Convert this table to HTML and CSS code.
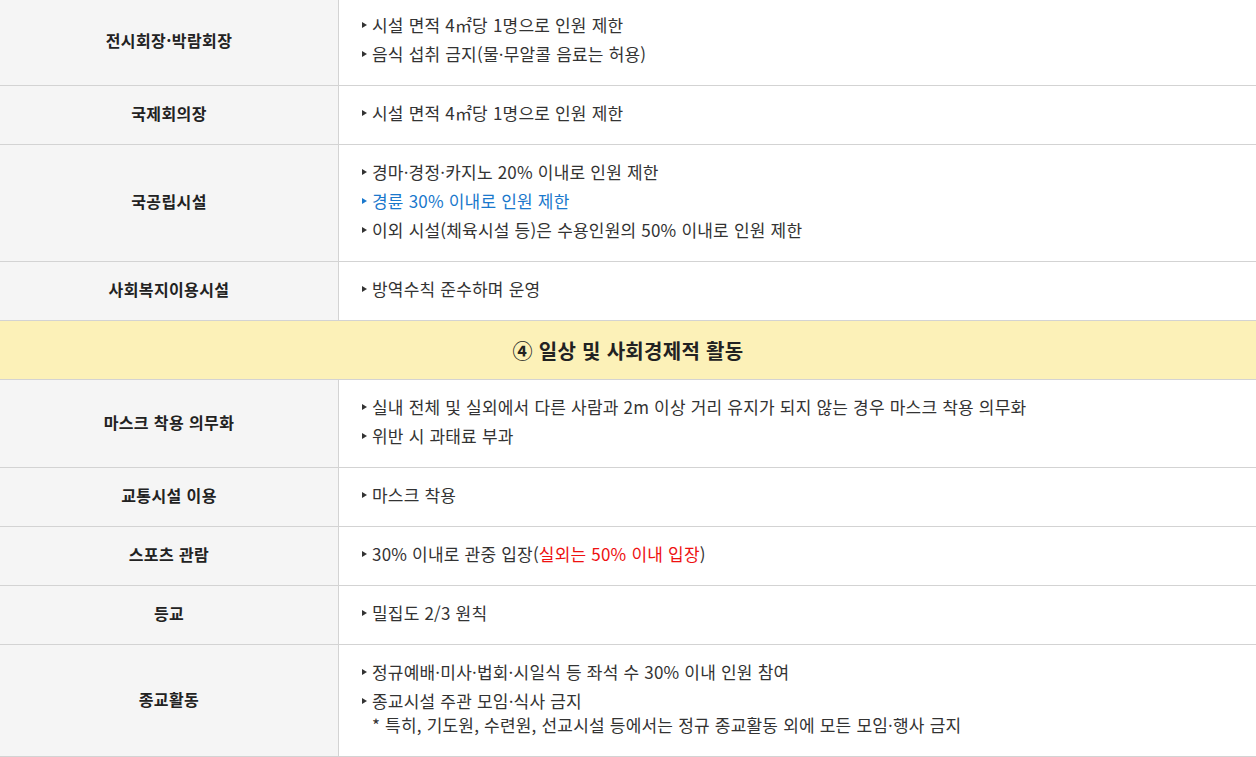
FILE: index.html
```html
<!DOCTYPE html>
<html lang="ko">
<head>
  <meta charset="UTF-8">
  <title>방역 수칙</title>
  <link rel="stylesheet" href="styles.css">
</head>
<body>
  <table class="rules">
    <tr>
      <th class="label">전시회장·박람회장</th>
      <td class="desc">
        <ul>
          <li>시설 면적 4㎡당 1명으로 인원 제한</li>
          <li>음식 섭취 금지(물·무알콜 음료는 허용)</li>
        </ul>
      </td>
    </tr>
    <tr>
      <th class="label">국제회의장</th>
      <td class="desc">
        <ul>
          <li>시설 면적 4㎡당 1명으로 인원 제한</li>
        </ul>
      </td>
    </tr>
    <tr>
      <th class="label">국공립시설</th>
      <td class="desc">
        <ul>
          <li>경마·경정·카지노 20% 이내로 인원 제한</li>
          <li class="blue">경륜 30% 이내로 인원 제한</li>
          <li>이외 시설(체육시설 등)은 수용인원의 50% 이내로 인원 제한</li>
        </ul>
      </td>
    </tr>
    <tr>
      <th class="label">사회복지이용시설</th>
      <td class="desc">
        <ul>
          <li>방역수칙 준수하며 운영</li>
        </ul>
      </td>
    </tr>
    <tr>
      <th class="section" colspan="2">④ 일상 및 사회경제적 활동</th>
    </tr>
    <tr>
      <th class="label">마스크 착용 의무화</th>
      <td class="desc">
        <ul>
          <li>실내 전체 및 실외에서 다른 사람과 2m 이상 거리 유지가 되지 않는 경우 마스크 착용 의무화</li>
          <li>위반 시 과태료 부과</li>
        </ul>
      </td>
    </tr>
    <tr>
      <th class="label">교통시설 이용</th>
      <td class="desc">
        <ul>
          <li>마스크 착용</li>
        </ul>
      </td>
    </tr>
    <tr>
      <th class="label">스포츠 관람</th>
      <td class="desc">
        <ul>
          <li>30% 이내로 관중 입장(<span class="red">실외는 50% 이내 입장</span>)</li>
        </ul>
      </td>
    </tr>
    <tr>
      <th class="label">등교</th>
      <td class="desc">
        <ul>
          <li>밀집도 2/3 원칙</li>
        </ul>
      </td>
    </tr>
    <tr>
      <th class="label">종교활동</th>
      <td class="desc">
        <ul>
          <li>정규예배·미사·법회·시일식 등 좌석 수 30% 이내 인원 참여</li>
          <li>종교시설 주관 모임·식사 금지<span class="note">* 특히, 기도원, 수련원, 선교시설 등에서는 정규 종교활동 외에 모든 모임·행사 금지</span></li>
        </ul>
      </td>
    </tr>
  </table>
</body>
</html>
```

FILE: styles.css
```css
body {
  margin: 0;
  font-family: "Noto Sans CJK KR", "Noto Sans", sans-serif;
  background-color: #fff;
  color: #333;
}

.rules {
  width: 100%;
  margin-top: -2px;
  border-collapse: collapse;
}

.rules th,
.rules td {
  border-bottom: 1px solid #d3d3d3;
  padding: 0;
}

.rules th.label {
  width: 338px;
  padding-bottom: 4px;
  background-color: #f5f5f5;
  border-right: 1px solid #d3d3d3;
  color: #222;
  font-size: 16px;
  font-weight: 700;
  letter-spacing: 0.4px;
  text-align: center;
  vertical-align: middle;
}

.rules td.desc {
  padding: 15px 20px 19px 23px;
  text-align: left;
  vertical-align: top;
  font-size: 17px;
  letter-spacing: 0.2px;
}

.desc ul {
  list-style: none;
  margin: 0;
  padding: 0;
}

.desc li {
  position: relative;
  padding-left: 10px;
  line-height: 24px;
}

.desc li + li {
  margin-top: 5px;
}

.desc li::before {
  content: "";
  position: absolute;
  left: 0;
  top: 9px;
  border-left: 5px solid #333;
  border-top: 3px solid transparent;
  border-bottom: 3px solid transparent;
}

.desc li.blue {
  color: #1a78cc;
}

.desc li.blue::before {
  border-left-color: #1a78cc;
}

.red {
  color: #ee1111;
}

.note {
  display: block;
}

.section {
  height: 58px;
  background-color: #fcf1b8;
  color: #222;
  font-size: 20px;
  font-weight: 700;
  letter-spacing: 0.3px;
  text-align: center;
  vertical-align: middle;
}
```
